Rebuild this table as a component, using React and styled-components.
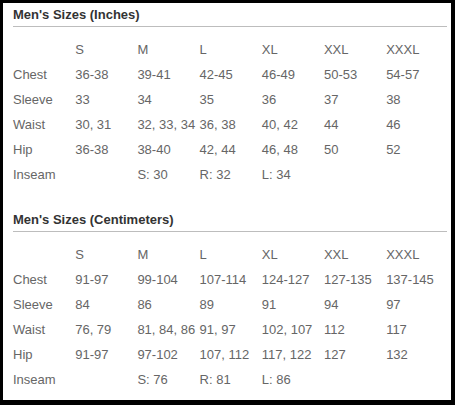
import React from "react";
import styled, { createGlobalStyle } from "styled-components";

const Global = createGlobalStyle`
  html, body { margin: 0; padding: 0; background: #fff; }
  body { font-family: "Liberation Sans", Arial, sans-serif; }
`;

const Frame = styled.div`
  width: 455px;
  height: 405px;
  box-sizing: border-box;
  border-style: solid;
  border-color: #000;
  border-width: 3px 4px 5px 3px;
  background: #fff;
  padding: 0 4px 0 10px;
  display: flex;
  flex-direction: column;
  gap: 21px;
`;

const Section = styled.section`
  display: flex;
  flex-direction: column;
`;

const Title = styled.h2`
  margin: 0;
  padding: 4px 0 3px;
  font-size: 13px;
  line-height: 16px;
  font-weight: bold;
  color: #333;
  border-bottom: 1px solid #bdbdbd;
`;

const SizeGrid = styled.div`
  margin-top: 10px;
  display: grid;
  grid-template-columns: 62.2px repeat(6, 62.2px) 1fr;
  grid-auto-rows: 25px;
`;

const Cell = styled.div`
  font-size: 13px;
  line-height: 25px;
  color: #666;
  white-space: nowrap;
  grid-column: ${(p) => p.$col + 1};
`;

const sizes = ["S", "M", "L", "XL", "XXL", "XXXL"];

const inches = [
  ["Chest", "36-38", "39-41", "42-45", "46-49", "50-53", "54-57"],
  ["Sleeve", "33", "34", "35", "36", "37", "38"],
  ["Waist", "30, 31", "32, 33, 34", "36, 38", "40, 42", "44", "46"],
  ["Hip", "36-38", "38-40", "42, 44", "46, 48", "50", "52"],
  ["Inseam", "", "S: 30", "R: 32", "L: 34", "", ""],
];

const cms = [
  ["Chest", "91-97", "99-104", "107-114", "124-127", "127-135", "137-145"],
  ["Sleeve", "84", "86", "89", "91", "94", "97"],
  ["Waist", "76, 79", "81, 84, 86", "91, 97", "102, 107", "112", "117"],
  ["Hip", "91-97", "97-102", "107, 112", "117, 122", "127", "132"],
  ["Inseam", "", "S: 76", "R: 81", "L: 86", "", ""],
];

function SizeTable({ title, rows }) {
  return (
    <Section>
      <Title>{title}</Title>
      <SizeGrid>
        <Cell $col={0} />
        {sizes.map((s, i) => (
          <Cell key={s} $col={i + 1}>{s}</Cell>
        ))}
        {rows.map((row) =>
          row.map((v, i) => (
            <Cell key={row[0] + i} $col={i}>{v}</Cell>
          ))
        )}
      </SizeGrid>
    </Section>
  );
}

export default function App() {
  return (
    <>
      <Global />
      <Frame>
        <SizeTable title="Men's Sizes (Inches)" rows={inches} />
        <SizeTable title="Men's Sizes (Centimeters)" rows={cms} />
      </Frame>
    </>
  );
}
